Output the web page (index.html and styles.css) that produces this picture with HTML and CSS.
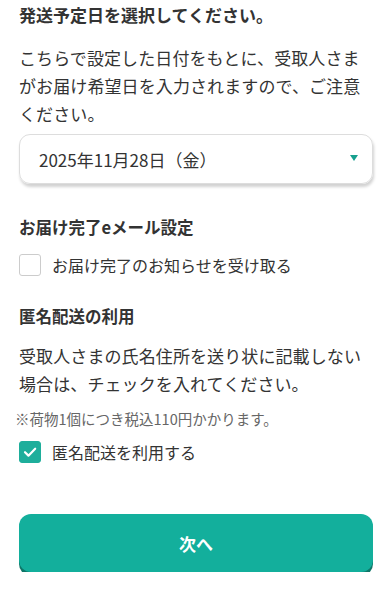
FILE: index.html
```html
<!DOCTYPE html>
<html lang="ja">
<head>
    <meta charset="UTF-8">
    <meta name="viewport" content="width=device-width, initial-scale=1.0">
    <title>発送予定日の選択</title>
    <link rel="stylesheet" href="styles.css">
</head>
<body>
    <div class="container">
        <div class="section">
            <h2 class="section-title top">発送予定日を選択してください。</h2>
            <p class="section-text">こちらで設定した日付をもとに、受取人さまがお届け希望日を入力されますので、ご注意ください。</p>
            <div class="select-box">
                <span class="select-value">2025年11月28日（金）</span>
                <span class="select-arrow"></span>
            </div>
        </div>

        <div class="section">
            <h2 class="section-title">お届け完了eメール設定</h2>
            <label class="check-row">
                <span class="check-box"></span>
                <span class="check-label">お届け完了のお知らせを受け取る</span>
            </label>
        </div>

        <div class="section">
            <h2 class="section-title anon">匿名配送の利用</h2>
            <p class="section-text">受取人さまの氏名住所を送り状に記載しない場合は、チェックを入れてください。</p>
            <p class="note">※荷物1個につき税込110円かかります。</p>
            <label class="check-row after-note">
                <span class="check-box checked">
                    <svg viewBox="0 0 22 22" width="22" height="22"><path d="M5.5 11.2l3.8 3.8 7.4-7.6" fill="none" stroke="#fff" stroke-width="2.4" stroke-linecap="round" stroke-linejoin="round"/></svg>
                </span>
                <span class="check-label">匿名配送を利用する</span>
            </label>
        </div>

        <button class="next-button">次へ</button>
    </div>
</body>
</html>
```

FILE: styles.css
```css
* {
    margin: 0;
    padding: 0;
    box-sizing: border-box;
}

body {
    font-family: "Noto Sans CJK JP", "Noto Sans", sans-serif;
    color: #333;
    background: #fff;
}

.container {
    padding: 0 19px;
}

.section-title {
    font-size: 16.5px;
    font-weight: 700;
    line-height: 24px;
    color: #333;
    padding-top: 31px;
    margin-bottom: 8px;
}

.section-title.top {
    font-size: 17px;
    padding-top: 3px;
    margin-bottom: 17px;
}

.section-title.anon {
    padding-top: 27px;
    margin-bottom: 14px;
}

.section-text {
    font-size: 17px;
    line-height: 28px;
    color: #333;
    letter-spacing: 0.1px;
}

.select-box {
    display: flex;
    align-items: center;
    justify-content: space-between;
    height: 50px;
    margin-top: 6px;
    padding: 0 14px 0 19px;
    border: 1px solid #ddd;
    border-radius: 11px;
    box-shadow: 1px 3px 3px rgba(0, 0, 0, 0.18);
}

.select-value {
    font-size: 17px;
    color: #333;
}

.select-arrow {
    width: 0;
    height: 0;
    border-left: 4px solid transparent;
    border-right: 4px solid transparent;
    border-top: 6px solid #17a08e;
    margin-top: -3px;
}

.check-row {
    display: flex;
    align-items: center;
    gap: 11px;
    margin-top: 14px;
}

.check-row.after-note {
    margin-top: 11px;
}

.check-box {
    width: 22px;
    height: 22px;
    border: 1px solid #ccc;
    border-radius: 3px;
    background: #fff;
    display: flex;
    align-items: center;
    justify-content: center;
}

.check-box.checked {
    background: #1eae9b;
    border-color: #1eae9b;
}

.check-label {
    font-size: 16px;
    color: #333;
}

.note {
    font-size: 14.5px;
    color: #666;
    margin-top: 11px;
    margin-left: -4px;
    line-height: 20px;
}

.next-button {
    display: block;
    width: 100%;
    height: 58px;
    margin-top: 50px;
    border: none;
    border-radius: 12px;
    background: #13af9c;
    box-shadow: 0 4px 0 #0e7668;
    color: #fff;
    font-family: "Noto Sans CJK JP", sans-serif;
    font-size: 17px;
    font-weight: 700;
}
```
